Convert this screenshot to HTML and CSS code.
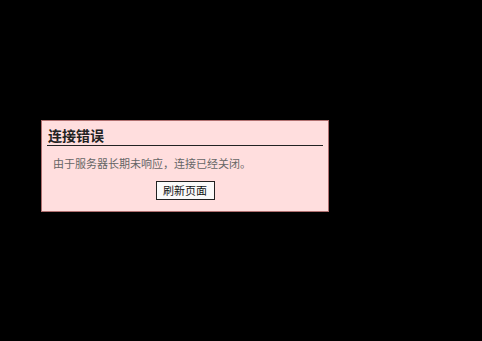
FILE: index.html
```html
<!DOCTYPE html>
<html lang="zh-CN">
<head>
<meta charset="utf-8">
<title>连接错误</title>
<link rel="stylesheet" href="styles.css">
</head>
<body>
<div class="stage">
  <div class="dialog">
    <h2 class="dialog-title">连接错误</h2>
    <p class="dialog-msg">由于服务器长期未响应，连接已经关闭。</p>
    <div class="dialog-actions">
      <button class="btn" type="button">刷新页面</button>
    </div>
  </div>
</div>
</body>
</html>
```
FILE: styles.css
```css
html, body {
  margin: 0;
  padding: 0;
  background: #000;
  height: 100%;
}
body {
  font-family: "Noto Sans CJK SC", "Liberation Sans", sans-serif;
}
.stage {
  padding: 120px 0 0 41px;
}
.dialog {
  box-sizing: border-box;
  width: 288px;
  background: #ffdede;
  border: 1px solid #b07070;
  padding: 6px 5px 11px 5px;
}
.dialog-title {
  margin: 0;
  font-size: 14px;
  line-height: 16px;
  font-weight: bold;
  color: #222;
  padding: 0 0 2px 1px;
  border-bottom: 1px solid #222;
}
.dialog-msg {
  margin: 10px 0 0 0;
  padding-left: 6px;
  font-size: 11px;
  line-height: 14px;
  color: #666;
}
.dialog-actions {
  display: flex;
  justify-content: center;
  margin-top: 11px;
}
.btn {
  box-sizing: border-box;
  width: 59px;
  height: 19px;
  padding: 0;
  margin: 0;
  font-family: "Noto Sans CJK SC", "Liberation Sans", sans-serif;
  font-size: 11px;
  line-height: 17px;
  color: #111;
  background: #fafafa;
  border: 1px solid #222;
  border-radius: 0;
}
```
